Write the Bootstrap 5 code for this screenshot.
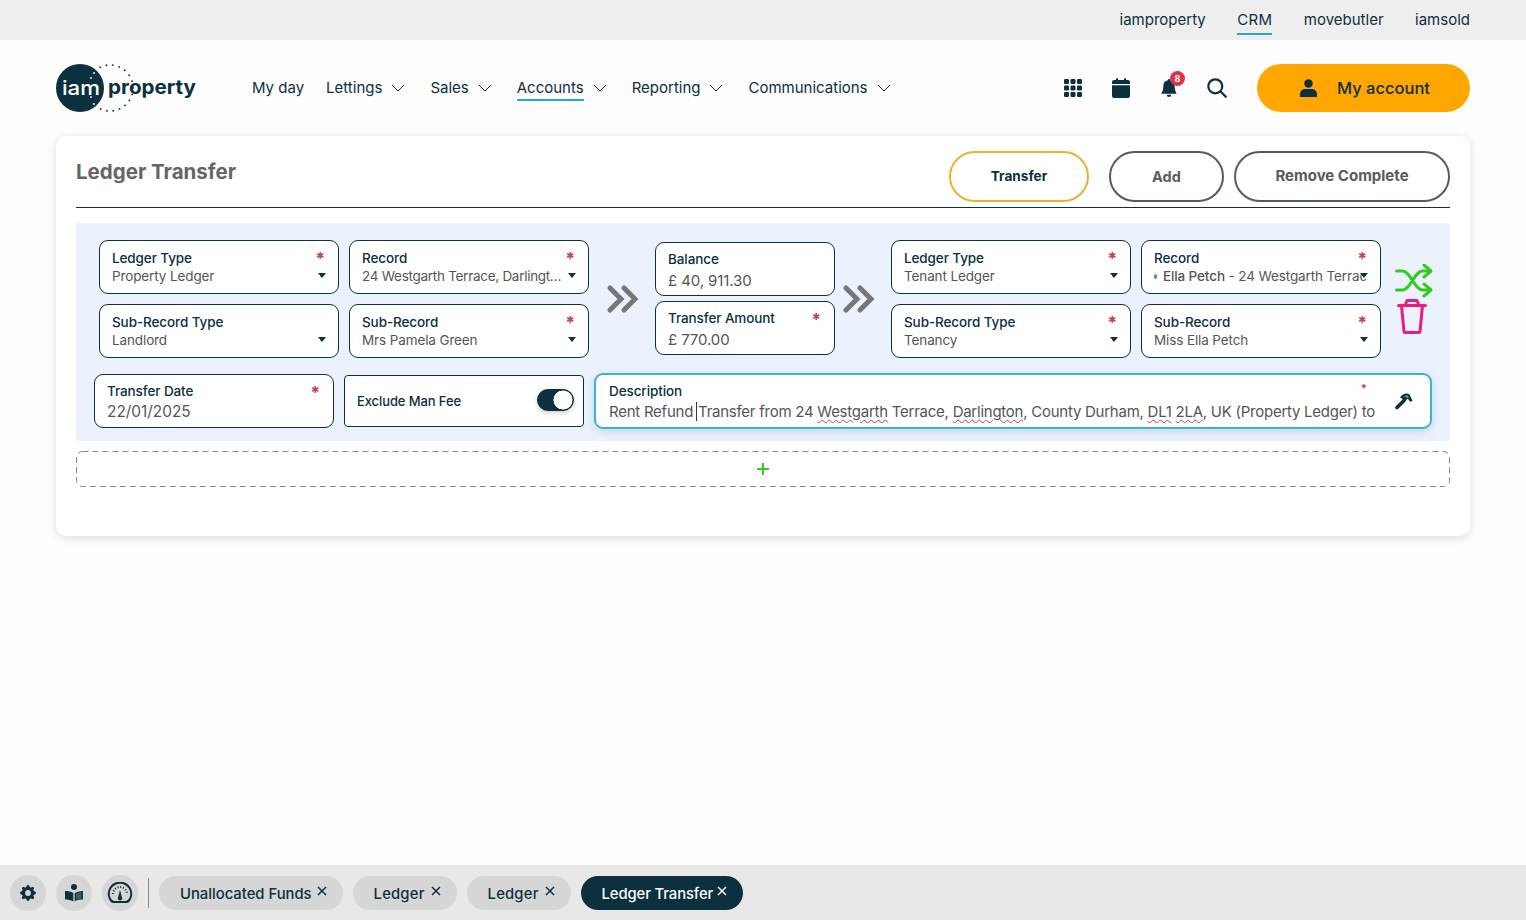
<!DOCTYPE html>
<html lang="en">
<head>
    <meta charset="UTF-8">
    <meta name="viewport" content="width=device-width, initial-scale=1.0">
    <title>Ledger Transfer</title>
    <link href="https://cdn.jsdelivr.net/npm/bootstrap@5.3.3/dist/css/bootstrap.min.css" rel="stylesheet">
    <style>
        html, body { height: 100%; }
        body {
            background-color: #fdfdfd;
            font-family: Inter, "Liberation Sans", sans-serif;
            color: #0c303d;
            min-height: 920px;
            overflow: hidden;
        }
        .topstrip { height: 40px; background: #eeeeee; padding-right: 56px; gap: 31.5px; font-size: 15px; }
        .topstrip a { color: #0c303d; text-decoration: none; padding: 2px 0 1px; border-bottom: 2px solid transparent; margin-top: 2px; }
        .topstrip a.on { border-bottom-color: #23a9c9; letter-spacing: .3px; }
        .mainnav { height: 96px; padding: 0 56px; }
        .logo-wrap { width: 196px; }
        .menu { font-size: 15px; }
        .menu a { color: #0c303d; text-decoration: none; line-height: 18px; padding: 4px 0 2px; border-bottom: 2px solid transparent; }
        .menu a.on { border-bottom-color: #23a9c9; }
        .menu-item { gap: 9px; margin-right: 25px; height: 26px; }
        .menu-item.plain { margin-right: 22px; }
        .tools { gap: 30px; margin-right: 30px; }
        .tool-search { margin-left: -1px; }
        .bell-badge { position: absolute; top: -7px; right: -7px; width: 15px; height: 15px; border-radius: 50%; background: #d8344f; color: #fff; font-size: 9px; font-weight: 700; line-height: 15px; text-align: center; }
        .acct-btn { width: 213px; height: 48px; background: #ffa600; border-radius: 24px; gap: 20px; font-size: 16.5px; font-weight: 500; color: #0c303d; padding-left: 3px; }
        .sheet { margin: 0 56px; height: 400px; background: #fff; border-radius: 10px; box-shadow: 0 2px 10px rgba(0,0,0,.13); padding: 15px 20px; }
        .sheet-head { height: 57px; border-bottom: 1px solid #0c303d; }
        .sheet-title { font-size: 20.5px; font-weight: 700; color: #666; margin: 9px 0 0; }
        .act-btn { height: 51px; border: 2px solid #5a5a5a; border-radius: 26px; background: #fff; font-size: 14.5px; font-weight: 700; color: #5a5a5a; padding: 0; }
        .act-transfer { width: 140px; border-color: #efb02f; color: #0c303d; margin-right: 20px; font-size: 13.6px; }
        .act-add { width: 115px; margin-right: 10px; }
        .act-remove { width: 216px; font-size: 15px; }
        .ledger-panel { margin-top: 15px; height: 218px; background: #ebf2fd; border-radius: 4px; padding: 17px 0 0 23px; }
        .pair-grid { display: grid; grid-template-columns: 240px 240px; gap: 10px; }
        .fbox { position: relative; height: 54px; background: #fff; border: 1px solid #0c303d; border-radius: 9px; padding: 8px 12px 0; overflow: hidden; }
        .flabel { font-size: 13.5px; letter-spacing: -.1px; font-weight: 500; line-height: 18px; white-space: nowrap; }
        .fvalue { font-size: 13.5px; letter-spacing: -.12px; line-height: 18px; color: #555; white-space: nowrap; overflow: hidden; text-overflow: ellipsis; width: 206px; }
        .fvalue.tight { letter-spacing: -.28px; width: 204px; }
        .fvalue.cut { text-overflow: clip; width: 212px; }
        .fvalue.big { font-size: 15px; letter-spacing: -.1px; line-height: 22px; width: auto; margin-top: 1px; }
        .mid-col .fvalue.big { margin-top: 2px; }
        .fvalue.desc-text { letter-spacing: -.25px; width: 790px; }
        .live-dot { display: inline-block; width: 3px; height: 5px; border-radius: 50%; background: #2fa84f; margin: 0 6px 2px 0; }
        .req { position: absolute; top: 9px; right: 13px; color: #c43a50; font-size: 17px; font-weight: 700; line-height: 18px; }
        .dd-caret { position: absolute; top: 32px; right: 12px; width: 0; height: 0; border-left: 4px solid transparent; border-right: 4px solid transparent; border-top: 5px solid #0c303d; }
        .arrow-a { width: 66px; padding-left: 1px; }
        .arrow-b { width: 56px; padding-left: 8px; }
        .mid-col { width: 180px; gap: 5px; margin-top: -1px; }
        .mid-col .fbox { padding-top: 7px; }
        .side-icons { width: 69px; padding-left: 14px; }
        .trash-icon { margin: 1px 0 0 2px; }
        .row-two { margin: 15px 0 0 -5px; }
        .date-box { width: 240px; padding-top: 7px; }
        .date-box .fvalue.big { letter-spacing: 0; font-size: 15.4px; }
        .fee-box { width: 240px; height: 52px; margin-left: 10px; border-radius: 4px; padding: 0 9px 0 12px; }
        .fee-box .flabel { font-size: 13px; }
        .fee-switch { width: 37px !important; height: 22px; margin: 0 !important; float: none !important; border-color: #0c303d !important; box-shadow: 0 2px 5px rgba(0,0,0,.2);
            background-image: radial-gradient(circle 10px at 25px 10px, #fff 9.2px, #0c303d 9.8px) !important; background-position: 0 0 !important; background-size: auto !important; }
        .desc-box { width: 838px; height: 56px; margin-left: 10px; border: 2px solid #3db4c6; padding: 7px 0 0 13px; box-shadow: 0 3px 10px rgba(60,120,170,.22); }
        .desc-box .req { font-size: 11px; top: 4px; right: 63px; }
        .hammer-icon { top: 17px; right: 16px; }
        .txt-cursor { border-left: 1px solid #333; margin: 0 1px 0 3px; }
        .spell { text-decoration: underline wavy #d8344f 1px; text-underline-offset: 2px; }
        .adder { margin-top: 10px; height: 36px; }
        .adder-outline { left: 0; top: 0; }
        .dock { position: absolute; left: 0; right: 0; bottom: 0; height: 55px; background: #e8e8e8; padding-left: 10px; }
        .dock-circle { width: 36px; height: 36px; border-radius: 50%; background: #d6d6d6; margin-right: 10px; }
        .dock-sep { width: 1px; height: 30px; background: #888; margin: 0 10px 0 0; }
        .dock-tab { height: 34px; margin-top: 1px; border-radius: 17px; background: #d6d6d6; margin-right: 10px; padding: 2px 16px 0 21px; font-size: 14.8px; font-weight: 500; gap: 5px; white-space: nowrap; }
        .dock-tab.short-tab { letter-spacing: .2px; gap: 6px; }
        .dock-tab.on { background: #0c303d; color: #fff; gap: 4px; letter-spacing: -.1px; }
        .dock-x { margin-top: -6px; }
    </style>
</head>
<body>
    <div class="topstrip d-flex justify-content-end align-items-center">
        <a href="#">iamproperty</a>
        <a href="#" class="on">CRM</a>
        <a href="#">movebutler</a>
        <a href="#">iamsold</a>
    </div>

    <nav class="mainnav d-flex align-items-center">
        <div class="logo-wrap flex-shrink-0">
            <svg width="140" height="50" viewBox="0 0 140 50">
                <circle cx="54" cy="25" r="23" fill="none" stroke="#0c303d" stroke-width="1.8" stroke-linecap="round" stroke-dasharray="0.1 6.4"/>
                <circle cx="24" cy="25" r="24" fill="#0c303d"/>
                <g fill="#fff"><circle cx="35" cy="15" r=".9"/><circle cx="38" cy="10" r=".9"/><circle cx="35" cy="34" r=".9"/><circle cx="38" cy="41" r=".9"/></g>
                <text x="6" y="32" fill="#fff" font-family="Inter, sans-serif" font-size="20" font-weight="500" textLength="38" lengthAdjust="spacingAndGlyphs">iam</text>
                <text x="52" y="31" fill="#0c303d" font-family="Inter, sans-serif" font-size="19" font-weight="700" textLength="88" lengthAdjust="spacingAndGlyphs">property</text>
            </svg>
        </div>
        <div class="menu d-flex align-items-center flex-grow-1">
            <div class="menu-item plain d-flex align-items-center"><a href="#">My day</a></div>
            <div class="menu-item d-flex align-items-center"><a href="#">Lettings</a>
                <svg width="14" height="8" viewBox="0 0 14 8"><path d="M1 1l6 6 6-6" fill="none" stroke="#0c303d"/></svg></div>
            <div class="menu-item d-flex align-items-center"><a href="#">Sales</a>
                <svg width="14" height="8" viewBox="0 0 14 8"><path d="M1 1l6 6 6-6" fill="none" stroke="#0c303d"/></svg></div>
            <div class="menu-item d-flex align-items-center"><a href="#" class="on">Accounts</a>
                <svg width="14" height="8" viewBox="0 0 14 8"><path d="M1 1l6 6 6-6" fill="none" stroke="#0c303d"/></svg></div>
            <div class="menu-item d-flex align-items-center"><a href="#">Reporting</a>
                <svg width="14" height="8" viewBox="0 0 14 8"><path d="M1 1l6 6 6-6" fill="none" stroke="#0c303d"/></svg></div>
            <div class="menu-item d-flex align-items-center"><a href="#">Communications</a>
                <svg width="14" height="8" viewBox="0 0 14 8"><path d="M1 1l6 6 6-6" fill="none" stroke="#0c303d"/></svg></div>
        </div>
        <div class="tools d-flex align-items-center">
            <svg width="18" height="18" viewBox="0 0 18 18" fill="#0c303d">
                <rect x="0" y="0" width="5" height="5" rx="1.2"/><rect x="6.5" y="0" width="5" height="5" rx="1.2"/><rect x="13" y="0" width="5" height="5" rx="1.2"/>
                <rect x="0" y="6.5" width="5" height="5" rx="1.2"/><rect x="6.5" y="6.5" width="5" height="5" rx="1.2"/><rect x="13" y="6.5" width="5" height="5" rx="1.2"/>
                <rect x="0" y="13" width="5" height="5" rx="1.2"/><rect x="6.5" y="13" width="5" height="5" rx="1.2"/><rect x="13" y="13" width="5" height="5" rx="1.2"/>
            </svg>
            <svg width="18" height="20" viewBox="0 0 18 20" fill="#0c303d">
                <rect x="4" y="0" width="2" height="4" rx="1"/><rect x="12" y="0" width="2" height="4" rx="1"/>
                <path d="M2 2h14a2 2 0 0 1 2 2v2H0V4a2 2 0 0 1 2-2zM0 7.2h18V18a2 2 0 0 1-2 2H2a2 2 0 0 1-2-2z"/>
            </svg>
            <span class="position-relative d-inline-flex">
                <svg width="18" height="20" viewBox="0 0 16 16" fill="#0c303d"><path d="M8 16a2 2 0 0 0 2-2H6a2 2 0 0 0 2 2zm.995-14.901a1 1 0 1 0-1.99 0A5.002 5.002 0 0 0 3 6c0 1.098-.5 6-2 7h14c-1.5-1-2-5.902-2-7 0-2.42-1.72-4.44-4.005-4.901z"/></svg>
                <span class="bell-badge">8</span>
            </span>
            <svg class="tool-search" width="20" height="20" viewBox="0 0 20 20" fill="none" stroke="#0c303d" stroke-width="2.2" stroke-linecap="round"><circle cx="8.3" cy="8.3" r="7"/><path d="M13.5 13.5l5.300 5.300"/></svg>
        </div>
        <div class="acct-btn d-flex align-items-center justify-content-center flex-shrink-0">
            <svg width="17" height="18" viewBox="0 0 18 19" fill="#0c303d"><circle cx="9" cy="4.800" r="4.500"/><path d="M0 19v-3c0-3.500 3-5.500 6-5.500h6c3 0 6 2 6 5.500v3z"/></svg>
            <span>My account</span>
        </div>
    </nav>

    <main class="sheet">
        <div class="sheet-head d-flex justify-content-between align-items-start">
            <h1 class="sheet-title">Ledger Transfer</h1>
            <div class="d-flex">
                <button class="btn act-btn act-transfer">Transfer</button>
                <button class="btn act-btn act-add">Add</button>
                <button class="btn act-btn act-remove">Remove Complete</button>
            </div>
        </div>

        <section class="ledger-panel">
            <div class="d-flex align-items-center">
                <div class="pair-grid">
                    <div class="fbox"><div class="flabel">Ledger Type</div><div class="fvalue">Property Ledger</div><span class="req">*</span><span class="dd-caret"></span></div>
                    <div class="fbox"><div class="flabel">Record</div><div class="fvalue tight">24 Westgarth Terrace, Darlington, County Durham</div><span class="req">*</span><span class="dd-caret"></span></div>
                    <div class="fbox"><div class="flabel">Sub-Record Type</div><div class="fvalue">Landlord</div><span class="dd-caret"></span></div>
                    <div class="fbox"><div class="flabel">Sub-Record</div><div class="fvalue">Mrs Pamela Green</div><span class="req">*</span><span class="dd-caret"></span></div>
                </div>
                <div class="arrow-a d-flex justify-content-center">
                    <svg width="32" height="28" viewBox="0 0 32 28" fill="none" stroke="#777" stroke-width="5" stroke-linecap="round"><path d="M3 3l11 11L3 25M17 3l11 11-11 11"/></svg>
                </div>
                <div class="mid-col d-flex flex-column">
                    <div class="fbox"><div class="flabel">Balance</div><div class="fvalue big">£ 40, 911.30</div></div>
                    <div class="fbox"><div class="flabel">Transfer Amount</div><div class="fvalue big">£ 770.00</div><span class="req">*</span></div>
                </div>
                <div class="arrow-b d-flex">
                    <svg width="32" height="28" viewBox="0 0 32 28" fill="none" stroke="#777" stroke-width="5" stroke-linecap="round"><path d="M3 3l11 11L3 25M17 3l11 11-11 11"/></svg>
                </div>
                <div class="pair-grid">
                    <div class="fbox"><div class="flabel">Ledger Type</div><div class="fvalue">Tenant Ledger</div><span class="req">*</span><span class="dd-caret"></span></div>
                    <div class="fbox"><div class="flabel">Record</div><div class="fvalue cut"><span class="live-dot"></span><strong class="fw-medium">Ella Petch</strong> - 24 Westgarth Terrace</div><span class="req">*</span><span class="dd-caret"></span></div>
                    <div class="fbox"><div class="flabel">Sub-Record Type</div><div class="fvalue">Tenancy</div><span class="req">*</span><span class="dd-caret"></span></div>
                    <div class="fbox"><div class="flabel">Sub-Record</div><div class="fvalue">Miss Ella Petch</div><span class="req">*</span><span class="dd-caret"></span></div>
                </div>
                <div class="side-icons d-flex flex-column align-items-start">
                    <svg width="38" height="34" viewBox="0 0 38 34" fill="none" stroke="#35c91f" stroke-width="3" stroke-linecap="round" stroke-linejoin="round">
                        <path d="M1.500 7h6c8 0 12 19 20 19h8M1.500 26h6c8 0 12-19 20-19h8M29 1l7 6-7 6M29 20l7 6-7 6"/>
                    </svg>
                    <svg class="trash-icon" width="30" height="35" viewBox="0 0 30 35" fill="none" stroke="#ea1c82" stroke-width="3" stroke-linejoin="round" stroke-linecap="round">
                        <path d="M1.500 6.500h27M8 6.500l2-5h10l2 5M4.500 6.500l2.500 26c0 .5.5 1 1 1h14c.5 0 1-.5 1-1l2.500-26"/>
                    </svg>
                </div>
            </div>

            <div class="row-two d-flex align-items-center">
                <div class="fbox date-box"><div class="flabel">Transfer Date</div><div class="fvalue big">22/01/2025</div><span class="req">*</span></div>
                <div class="fbox fee-box d-flex align-items-center justify-content-between">
                    <span class="flabel">Exclude Man Fee</span>
                    <div class="form-check form-switch m-0 p-0 d-flex"><input class="form-check-input fee-switch" type="checkbox" checked aria-label="Exclude Man Fee"></div>
                </div>
                <div class="fbox desc-box">
                    <div class="flabel">Description</div>
                    <div class="fvalue big desc-text">Rent Refund<span class="txt-cursor"></span>Transfer from 24 <span class="spell">Westgarth</span> Terrace, <span class="spell">Darlington</span>, County Durham, <span class="spell">DL1</span> <span class="spell">2LA</span>, UK (Property Ledger) to</div>
                    <span class="req">*</span>
                    <svg class="hammer-icon position-absolute" width="20" height="18" viewBox="0 0 20 18">
                        <path d="M3 15.500L10 8.500" stroke="#0c303d" stroke-width="3.600" stroke-linecap="round"/>
                        <path d="M6 5.500C9 1 13 .5 15.500 2.500L18.500 8.500 16.500 10 13.500 6.500 11 9.500 8 6.500z" fill="#0c303d"/>
                        <path d="M10 4.500c1.500-1 3-1.200 4-.5l1 2z" fill="#8a9aa0"/>
                    </svg>
                </div>
            </div>
        </section>

        <div class="adder position-relative d-flex align-items-center justify-content-center">
            <svg class="adder-outline position-absolute" width="1374" height="36"><rect x=".5" y=".5" width="1373" height="35" rx="6" fill="none" stroke="#888" stroke-dasharray="6 4"/></svg>
            <svg width="14" height="14" viewBox="0 0 14 14" stroke="#35c91f" stroke-width="2"><path d="M7 1v12M1 7h12"/></svg>
        </div>
    </main>

    <footer class="dock d-flex align-items-center">
        <div class="dock-circle d-flex align-items-center justify-content-center">
            <svg width="16" height="16" viewBox="0 0 16 16" fill="#0c303d"><path d="M9.405 1.05c-.413-1.4-2.397-1.4-2.81 0l-.1.34a1.464 1.464 0 0 1-2.105.872l-.31-.17c-1.283-.698-2.686.705-1.987 1.987l.169.311c.446.82.023 1.841-.872 2.105l-.34.1c-1.4.413-1.4 2.397 0 2.81l.34.1a1.464 1.464 0 0 1 .872 2.105l-.17.31c-.698 1.283.705 2.686 1.987 1.987l.311-.169a1.464 1.464 0 0 1 2.105.872l.1.34c.413 1.4 2.397 1.4 2.81 0l.1-.34a1.464 1.464 0 0 1 2.105-.872l.31.17c1.283.698 2.686-.705 1.987-1.987l-.169-.311a1.464 1.464 0 0 1 .872-2.105l.34-.1c1.4-.413 1.4-2.397 0-2.81l-.34-.1a1.464 1.464 0 0 1-.872-2.105l.17-.31c.698-1.283-.705-2.686-1.987-1.987l-.311.169a1.464 1.464 0 0 1-2.105-.872l-.1-.34zM8 10.93a2.929 2.929 0 1 1 0-5.86 2.929 2.929 0 0 1 0 5.858z"/></svg>
        </div>
        <div class="dock-circle d-flex align-items-center justify-content-center">
            <svg width="18" height="18" viewBox="0 0 18 18" fill="#0c303d"><circle cx="9" cy="3" r="3"/><path d="M0 7c3 0 6 .5 8.300 2v8.500C6 16 3 15.500 0 15.500z"/><path d="M10.300 9.500c1.800-1.200 3.700-1.600 7-1.800v7.100c-2.700 0-5 .4-7 1.500z" fill="#0c303d" fill-opacity=".75" stroke="#0c303d" stroke-width="1.300"/></svg>
        </div>
        <div class="dock-circle d-flex align-items-center justify-content-center">
            <svg width="26" height="22" viewBox="0 0 26 22" fill="none" stroke="#0c303d">
                <path d="M2.800 16.500A11.200 11.200 0 1 1 23.200 16.500Q21.500 20.500 18 20H8Q4.500 20.500 2.800 16.500z" stroke-width="2"/>
                <path d="M6 12a7 7 0 0 1 14 0" stroke-width="2.200" stroke-dasharray="1 1.800"/>
                <path d="M13 8l2 7.500a2.200 2.200 0 1 1-4 0z" fill="#0c303d" stroke="none"/>
            </svg>
        </div>
        <div class="dock-sep"></div>
        <div class="dock-tab d-flex align-items-center"><span>Unallocated Funds</span><svg class="dock-x" width="10" height="10" viewBox="0 0 10 10" stroke="currentColor" stroke-width="1.500"><path d="M1 1l8 8M9 1l-8 8"/></svg></div>
        <div class="dock-tab short-tab d-flex align-items-center"><span>Ledger</span><svg class="dock-x" width="10" height="10" viewBox="0 0 10 10" stroke="currentColor" stroke-width="1.500"><path d="M1 1l8 8M9 1l-8 8"/></svg></div>
        <div class="dock-tab short-tab d-flex align-items-center"><span>Ledger</span><svg class="dock-x" width="10" height="10" viewBox="0 0 10 10" stroke="currentColor" stroke-width="1.500"><path d="M1 1l8 8M9 1l-8 8"/></svg></div>
        <div class="dock-tab on d-flex align-items-center"><span>Ledger Transfer</span><svg class="dock-x" width="10" height="10" viewBox="0 0 10 10" stroke="currentColor" stroke-width="1.500"><path d="M1 1l8 8M9 1l-8 8"/></svg></div>
    </footer>

    <script src="https://cdn.jsdelivr.net/npm/bootstrap@5.3.3/dist/js/bootstrap.bundle.min.js"></script>
</body>
</html>
